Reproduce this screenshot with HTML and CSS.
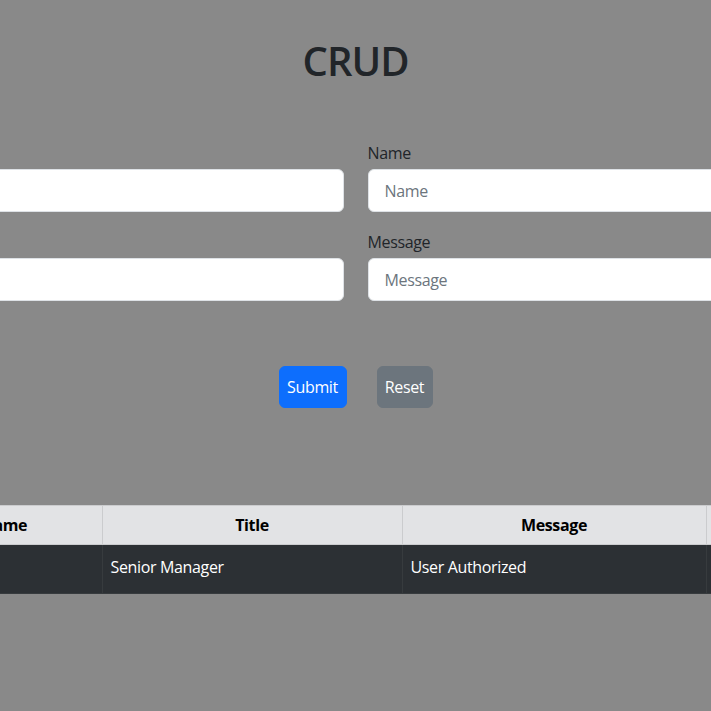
FILE: index.html
```html
<!DOCTYPE html>
<html lang="en">
<head>
<meta charset="utf-8">
<title>CRUD</title>
<link rel="stylesheet" href="styles.css">
</head>
<body>
<main class="page">
  <h1 class="title">CRUD</h1>
  <form class="form">
    <div class="fields">
      <div class="field">
        <label class="field-label" for="f-id">ID</label>
        <input class="field-input" id="f-id" type="text" placeholder="ID">
      </div>
      <div class="field">
        <label class="field-label" for="f-name">Name</label>
        <input class="field-input" id="f-name" type="text" placeholder="Name">
      </div>
      <div class="field">
        <label class="field-label" for="f-title">Title</label>
        <input class="field-input" id="f-title" type="text" placeholder="Title">
      </div>
      <div class="field">
        <label class="field-label" for="f-msg">Message</label>
        <input class="field-input" id="f-msg" type="text" placeholder="Message">
      </div>
    </div>
    <div class="actions">
      <button class="btn btn-primary" type="button">Submit</button>
      <button class="btn btn-secondary" type="reset">Reset</button>
    </div>
  </form>
  <table class="records">
    <colgroup>
      <col class="col-id">
      <col class="col-name">
      <col class="col-title">
      <col class="col-msg">
      <col class="col-act">
    </colgroup>
    <thead>
      <tr>
        <th>#</th>
        <th>Name</th>
        <th>Title</th>
        <th>Message</th>
        <th>Action</th>
      </tr>
    </thead>
    <tbody>
      <tr>
        <td>1</td>
        <td>Admin</td>
        <td>Senior Manager</td>
        <td>User Authorized</td>
        <td>Edit</td>
      </tr>
    </tbody>
  </table>
</main>
</body>
</html>
```
FILE: styles.css
```css
html, body {
  margin: 0;
  padding: 0;
  background: #898989;
  overflow: hidden;
}

body {
  font-family: "Open Sans", "Noto Sans", sans-serif;
  color: #212529;
  font-size: 16px;
  line-height: 24px;
  letter-spacing: -0.35px;
}

.page {
  display: flex;
  flex-direction: column;
  align-items: center;
}

.title {
  margin: 37px 0 0;
  font-size: 40px;
  line-height: 48px;
  font-weight: 600;
  letter-spacing: -1px;
  color: #212529;
}

.form {
  width: 1000px;
  margin-top: 56px;
}

.fields {
  display: grid;
  grid-template-columns: 1fr 1fr;
  column-gap: 24px;
  row-gap: 18px;
}

.field-label {
  display: block;
  line-height: 24px;
  margin-bottom: 4px;
  color: #212529;
}

.field-input {
  box-sizing: border-box;
  display: block;
  width: 100%;
  height: 43px;
  padding: 0 16px;
  border: 1px solid #dee2e6;
  border-radius: 6px;
  background: #fff;
  font-family: inherit;
  font-size: 16px;
  letter-spacing: -0.35px;
  color: #212529;
  outline: none;
}

.field-input::placeholder {
  color: #6c757d;
  opacity: 1;
}

.actions {
  display: flex;
  justify-content: center;
  gap: 30px;
  margin-top: 65px;
}

.btn {
  box-sizing: border-box;
  height: 42px;
  padding: 0;
  border: 1px solid transparent;
  border-radius: 6px;
  color: #fff;
  font-family: inherit;
  font-size: 16px;
  letter-spacing: -0.35px;
  cursor: pointer;
}

.btn-primary {
  width: 68px;
  background: #0d6efd;
  border-color: #0d6efd;
}

.btn-secondary {
  width: 56px;
  background: #6c757d;
  border-color: #6c757d;
}

.records {
  width: 1011px;
  margin-top: 97px;
  table-layout: fixed;
  border-collapse: collapse;
}

.col-id { width: 56px; }
.col-name { width: 196px; }
.col-title { width: 300px; }
.col-msg { width: 304px; }
.col-act { width: 155px; }

.records th {
  padding: 7px 8px;
  background: #e2e3e5;
  border: 1px solid #cbccce;
  color: #000;
  font-weight: 700;
  text-align: center;
}

.records td {
  padding: 10px 8px 14px;
  background: #2c3034;
  border: 1px solid #373b3e;
  color: #fff;
  text-align: left;
}
```
